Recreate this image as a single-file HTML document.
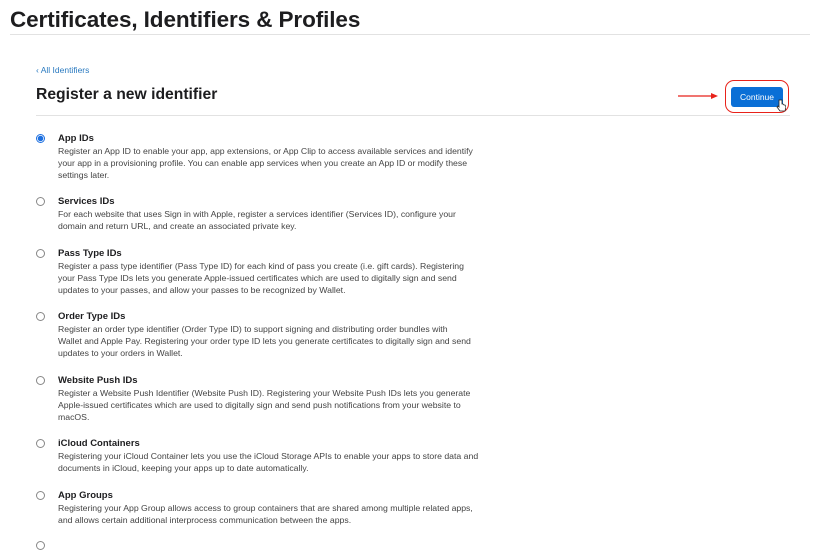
<!DOCTYPE html>
<html><head><meta charset="utf-8"><style>
body{margin:0;width:825px;height:544px;overflow:hidden;background:#fff;font-family:"Liberation Sans",sans-serif;color:#1d1d1f;position:relative}
.a{position:absolute;white-space:nowrap}
h1{position:absolute;left:10px;top:7px;margin:0;font-size:22.5px;font-weight:bold;letter-spacing:-0.1px}
.l1{position:absolute;left:10px;top:34px;width:800px;height:1px;background:#e2e2e2}
.back{left:36px;top:65px;font-size:8.5px;color:#2a7ac0}
h2{position:absolute;left:36px;top:86px;margin:0;font-size:15.7px;font-weight:bold}
.l2{position:absolute;left:36px;top:115px;width:754px;height:1px;background:#e2e2e2}
.t{left:58px;font-size:9.5px;font-weight:bold}
.d{left:58px;font-size:8.7px;line-height:12px;color:#444}
.r{position:absolute;left:36px;width:7px;height:7px;border:1px solid #888;border-radius:50%}
.r.on{border-color:#1c6fe0;background:radial-gradient(circle,#1c6fe0 0 2.5px,#fff 3px)}
.btn{position:absolute;left:731px;top:87px;width:52px;height:20px;background:#0a6fd6;color:#fff;border-radius:3px;font-size:8.5px;text-align:center;line-height:20px}
.ring{position:absolute;left:725px;top:80px;width:62px;height:31px;border:1.5px solid #e8221a;border-radius:9px}
</style></head><body>
<h1>Certificates, Identifiers &amp; Profiles</h1>
<div class="l1"></div>
<div class="a back">‹ All Identifiers</div>
<h2>Register a new identifier</h2>
<div class="l2"></div>
<svg class="a" style="left:677px;top:91px" width="42" height="10"><line x1="1" y1="5" x2="36" y2="5" stroke="#e8221a" stroke-width="1.2"/><path d="M34 2 L41 5 L34 8Z" fill="#e8221a"/></svg>
<div class="btn">Continue</div>
<div class="ring"></div>
<svg class="a" style="left:776px;top:99px" width="10" height="13"><path d="M3 1v7l-1-1-1 1 3 4h5l1-4-1-2-1 0-1-1-1 0V1z" fill="#fff" stroke="#222" stroke-width=".8"/></svg>

<div class="r on" style="top:134px"></div>
<div class="a t" style="top:133px">App IDs</div>
<div class="a d" style="top:145px">Register an App ID to enable your app, app extensions, or App Clip to access available services and identify<br>your app in a provisioning profile. You can enable app services when you create an App ID or modify these<br>settings later.</div>

<div class="r" style="top:197px"></div>
<div class="a t" style="top:196px">Services IDs</div>
<div class="a d" style="top:208px">For each website that uses Sign in with Apple, register a services identifier (Services ID), configure your<br>domain and return URL, and create an associated private key.</div>

<div class="r" style="top:249px"></div>
<div class="a t" style="top:248px">Pass Type IDs</div>
<div class="a d" style="top:260px">Register a pass type identifier (Pass Type ID) for each kind of pass you create (i.e. gift cards). Registering<br>your Pass Type IDs lets you generate Apple-issued certificates which are used to digitally sign and send<br>updates to your passes, and allow your passes to be recognized by Wallet.</div>

<div class="r" style="top:312px"></div>
<div class="a t" style="top:311px">Order Type IDs</div>
<div class="a d" style="top:323px">Register an order type identifier (Order Type ID) to support signing and distributing order bundles with<br>Wallet and Apple Pay. Registering your order type ID lets you generate certificates to digitally sign and send<br>updates to your orders in Wallet.</div>

<div class="r" style="top:376px"></div>
<div class="a t" style="top:375px">Website Push IDs</div>
<div class="a d" style="top:387px">Register a Website Push Identifier (Website Push ID). Registering your Website Push IDs lets you generate<br>Apple-issued certificates which are used to digitally sign and send push notifications from your website to<br>macOS.</div>

<div class="r" style="top:439px"></div>
<div class="a t" style="top:438px">iCloud Containers</div>
<div class="a d" style="top:450px">Registering your iCloud Container lets you use the iCloud Storage APIs to enable your apps to store data and<br>documents in iCloud, keeping your apps up to date automatically.</div>

<div class="r" style="top:491px"></div>
<div class="a t" style="top:490px">App Groups</div>
<div class="a d" style="top:502px">Registering your App Group allows access to group containers that are shared among multiple related apps,<br>and allows certain additional interprocess communication between the apps.</div>

<div class="r" style="top:541px"></div>
</body></html>
